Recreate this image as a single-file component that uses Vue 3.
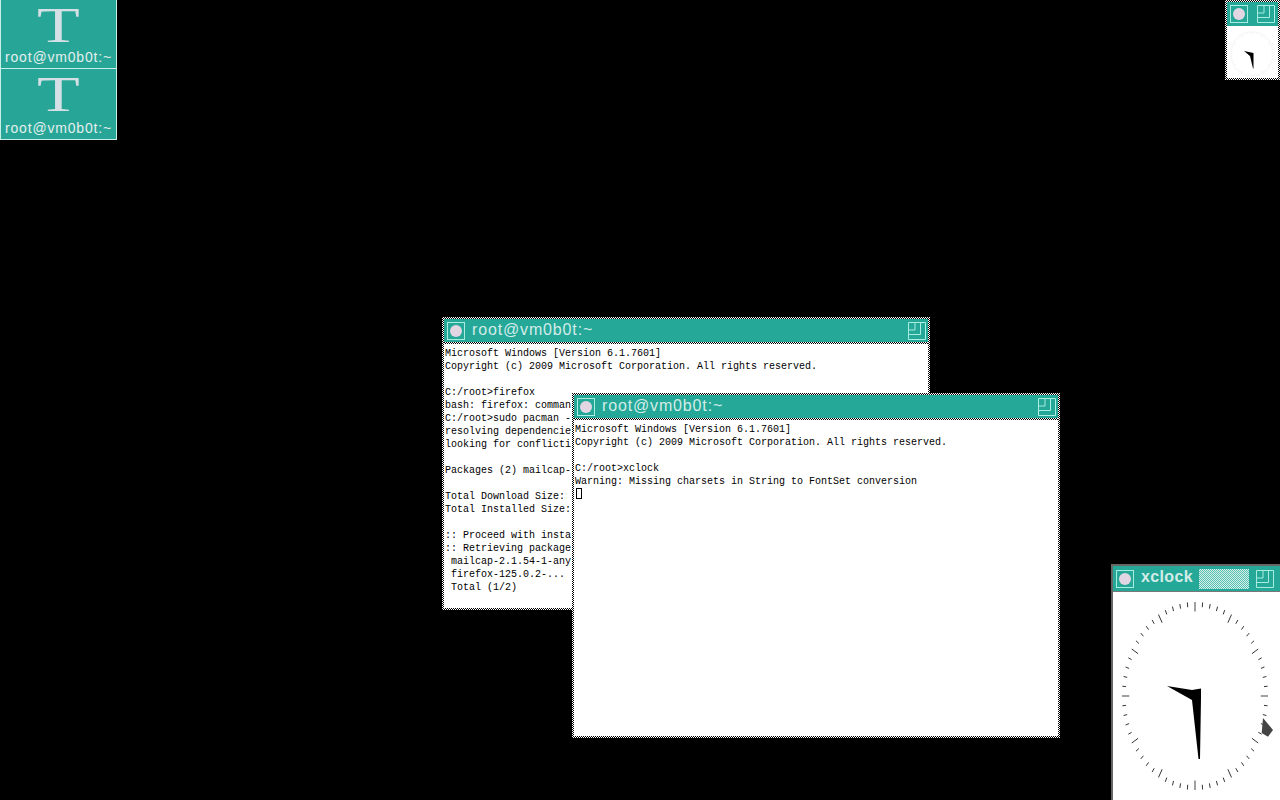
<script setup>
const term1 = [
  'Microsoft Windows [Version 6.1.7601]',
  'Copyright (c) 2009 Microsoft Corporation. All rights reserved.',
  '',
  'C:/root>firefox',
  'bash: firefox: comman',
  'C:/root>sudo pacman -',
  'resolving dependencie',
  'looking for conflicti',
  '',
  'Packages (2) mailcap-',
  '',
  'Total Download Size:',
  'Total Installed Size:',
  '',
  ':: Proceed with insta',
  ':: Retrieving package',
  ' mailcap-2.1.54-1-any',
  ' firefox-125.0.2-...',
  ' Total (1/2)'
]
const term2 = [
  'Microsoft Windows [Version 6.1.7601]',
  'Copyright (c) 2009 Microsoft Corporation. All rights reserved.',
  '',
  'C:/root>xclock',
  'Warning: Missing charsets in String to FontSet conversion'
]
const makeTicks = (cx, cy, rx, ry, minor, major) =>
  Array.from({ length: 60 }, (_, i) => {
    const a = (i * Math.PI) / 30
    const isHour = i % 5 === 0
    const inner = isHour ? major : minor
    const sx = Math.sin(a)
    const cy2 = -Math.cos(a)
    const cardinal = i % 15 === 0
    return {
      id: i,
      x1: cx + sx * rx,
      y1: cy + cy2 * ry,
      x2: cx + sx * rx * inner,
      y2: cy + cy2 * ry * inner,
      stroke: cardinal ? '#a0a0a0' : '#333',
      width: cardinal ? 2 : 1
    }
  })
const bigTicks = makeTicks(82, 104, 73, 94, 0.95, 0.9)
const smallTicks = makeTicks(25, 26, 22, 23, 0.92, 0.86)
const zoomPath = 'M.5.5H17.5V17.5H.5ZM.5 8H7V.5M.5 12.500H12.500V.5'
</script>

<template>
  <div class="desktop">
    <div class="icon icon-a">
      <span class="icon-glyph">T</span>
      <span class="icon-label">root@vm0b0t:~</span>
    </div>
    <div class="icon icon-b">
      <span class="icon-glyph">T</span>
      <span class="icon-label">root@vm0b0t:~</span>
    </div>

    <div class="window clock-mini">
      <div class="mini-inner">
        <div class="titlebar mini-bar">
          <span class="btn"><i class="dot"></i></span>
          <span class="btn">
            <svg width="18" height="18" viewBox="0 0 18 18"><path :d="zoomPath" fill="none" stroke="#a9ece0" /></svg>
          </span>
        </div>
        <div class="mini-face">
          <svg width="51" height="50" viewBox="0 0 51 50">
            <line v-for="t in smallTicks" :key="t.id" :x1="t.x1" :y1="t.y1" :x2="t.x2" :y2="t.y2" stroke="#eeeeee" stroke-width="1" />
            <polygon points="17,23 26.500,25 26.500,40.500 26,40.500 23,28" fill="#000" />
          </svg>
        </div>
      </div>
    </div>

    <div class="window term term-back">
      <div class="term-inner">
        <div class="titlebar">
          <span class="btn"><i class="dot"></i></span>
          <span class="title">root@vm0b0t:~</span>
          <span class="spacer"></span>
          <span class="btn">
            <svg width="18" height="18" viewBox="0 0 18 18"><path :d="zoomPath" fill="none" stroke="#a9ece0" /></svg>
          </span>
        </div>
        <div class="sep"></div>
        <div class="screen">
          <div v-for="(line, i) in term1" :key="i" class="line">{{ line }}</div>
        </div>
      </div>
    </div>

    <div class="window term term-front">
      <div class="term-inner">
        <div class="titlebar">
          <span class="btn"><i class="dot"></i></span>
          <span class="title">root@vm0b0t:~</span>
          <span class="spacer"></span>
          <span class="btn">
            <svg width="18" height="18" viewBox="0 0 18 18"><path :d="zoomPath" fill="none" stroke="#a9ece0" /></svg>
          </span>
        </div>
        <div class="sep"></div>
        <div class="screen">
          <div v-for="(line, i) in term2" :key="i" class="line">{{ line }}</div>
          <i class="caret"></i>
        </div>
      </div>
    </div>

    <div class="clock-big">
      <div class="titlebar clock-bar">
        <span class="btn"><i class="dot"></i></span>
        <span class="clock-title">xclock</span>
        <span class="stipple"></span>
        <span class="btn">
          <svg width="18" height="18" viewBox="0 0 18 18"><path :d="zoomPath" fill="none" stroke="#a9ece0" /></svg>
        </span>
      </div>
      <div class="clock-face">
        <svg width="167" height="208" viewBox="0 0 167 208">
          <line v-for="t in bigTicks" :key="t.id" :x1="t.x1" :y1="t.y1" :x2="t.x2" :y2="t.y2" :stroke="t.stroke" :stroke-width="t.width" />
          <polygon points="54,94 79,98 88,96.500 88,106 87,167 85.500,167 79,108" fill="#000" />
        </svg>
      </div>
    </div>

    <svg class="pointer" width="14" height="21" viewBox="0 0 14 21">
      <polygon points="2,1 12,13 7,19.700 0.700,16" fill="#444" />
    </svg>
  </div>
</template>

<style>
html, body { margin: 0; background: #000; }
</style>

<style scoped>
.desktop {
  position: relative;
  width: 1280px;
  height: 800px;
  overflow: hidden;
  background: #000;
  font-family: "Liberation Sans", Arial, sans-serif;
}
.icon {
  position: absolute;
  left: 0;
  width: 117px;
  display: flex;
  flex-direction: column;
  align-items: center;
  background: #27a697;
  border: 1px solid #c7efe8;
  border-top: 0;
  box-sizing: border-box;
  color: #e3efee;
}
.icon-a { top: 0; height: 69px; }
.icon-b { top: 69px; height: 71px; }
.icon-glyph {
  font-family: "Liberation Serif", serif;
  font-size: 50px;
  line-height: 50px;
  height: 49px;
  color: #d5dfe6;
  transform: scaleX(1.4);
}
.icon-label {
  font-size: 14px;
  line-height: 16px;
  letter-spacing: 0.82px;
  white-space: nowrap;
}
.icon-b .icon-glyph { height: 51px; }
.window {
  position: absolute;
  box-sizing: border-box;
  padding: 2px;
  background: repeating-conic-gradient(#fff 0 25%, #000 0 50%) 0 0 / 2px 2px;
}
.term { width: 488px; }
.term-back { left: 442px; top: 317px; height: 293px; }
.term-front { left: 572px; top: 393px; height: 345px; }
.term-inner {
  height: 100%;
  background: #fff;
  display: flex;
  flex-direction: column;
  overflow: hidden;
}
.titlebar {
  display: flex;
  align-items: center;
  flex: none;
  height: 23px;
  padding: 0 3px;
  background: #25a898;
  color: #d3ece8;
}
.spacer { flex: 1; }
.btn {
  flex: none;
  width: 18px;
  height: 18px;
  display: flex;
  align-items: center;
  justify-content: center;
  box-sizing: border-box;
}
.btn:first-child { border: 1px solid #a9ece0; }
.dot {
  display: block;
  width: 12px;
  height: 12px;
  border-radius: 50%;
  background: #e2d6e2;
}
.title {
  margin: -2px 0 0 7px;
  font-size: 16px;
  letter-spacing: 0.85px;
  white-space: nowrap;
}
.term-back .titlebar,
.term-front .titlebar { padding-right: 2px; }
.sep {
  flex: none;
  height: 2px;
  background: repeating-conic-gradient(#fff 0 25%, #000 0 50%) 0 0 / 2px 2px;
}
.screen {
  position: relative;
  padding: 3px 0 0 1px;
  font-family: "Liberation Mono", "DejaVu Sans Mono", monospace;
  font-size: 10px;
  line-height: 13px;
  color: #000;
}
.line {
  width: fit-content;
  min-height: 13px;
  white-space: pre;
}
.caret {
  position: absolute;
  left: 2px;
  top: 68px;
  width: 4px;
  height: 9px;
  border: 1px solid #000;
}
.clock-mini {
  left: 1225px;
  top: 0;
  width: 55px;
  height: 80px;
}
.mini-inner {
  height: 100%;
  display: flex;
  flex-direction: column;
  background: #fff;
  overflow: hidden;
}
.mini-bar {
  height: 24px;
  padding: 0 3px;
  justify-content: space-between;
}
.mini-face {
  margin-top: 2px;
  flex: 1;
  background: #fff;
}
.mini-face svg { display: block; }
.clock-big {
  position: absolute;
  left: 1111px;
  top: 564px;
  width: 169px;
  height: 236px;
  box-sizing: border-box;
  display: flex;
  flex-direction: column;
  border-left: 2px solid #666;
  border-top: 2px solid #666;
  background: #fff;
}
.clock-bar {
  height: 25px;
  padding: 0 6px 0 3px;
}
.clock-title {
  margin: -3px 0 0 7px;
  font-size: 16px;
  font-weight: 700;
  letter-spacing: 0.35px;
  width: 59px;
  white-space: nowrap;
}
.stipple {
  flex: none;
  width: 50px;
  height: 20px;
  margin-right: 7px;
  background: repeating-conic-gradient(#d8f0ec 0 25%, #55bfb0 0 50%) 0 0 / 2px 2px;
}
.clock-face {
  flex: 1;
  border-top: 1px solid #777;
  overflow: hidden;
}
.clock-face svg { display: block; }
.pointer {
  position: absolute;
  left: 1261px;
  top: 717px;
}
</style>
